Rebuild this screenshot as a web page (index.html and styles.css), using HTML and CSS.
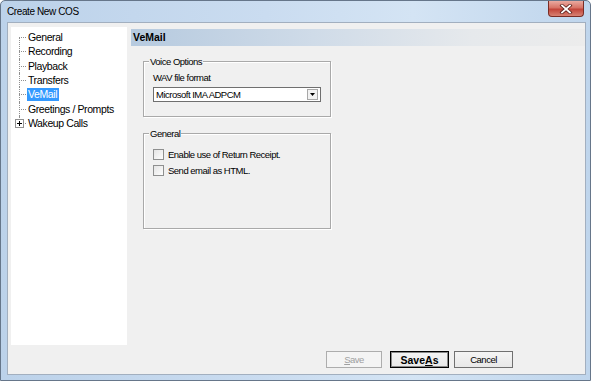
FILE: index.html
```html
<!DOCTYPE html>
<html lang="en">
<head>
    <meta charset="UTF-8">
    <title>Create New COS</title>
    <link rel="stylesheet" href="styles.css">
</head>
<body>

    <div class="window">
        <!-- Title bar -->
        <div class="titlebar">
            <span class="title">Create New COS</span>
            <div class="close">
                <svg width="14" height="10" viewBox="0 0 14 10">
                    <path d="M3 1.5 L11 8.5 M11 1.5 L3 8.5" stroke="#5a1f1a" stroke-width="3.4" stroke-linecap="square"/>
                    <path d="M3 1.5 L11 8.5 M11 1.5 L3 8.5" stroke="#fff" stroke-width="1.8" stroke-linecap="square"/>
                </svg>
            </div>
        </div>

        <div class="client">
            <div class="main">
                <!-- Navigation tree -->
                <ul class="tree">
                    <li class="first"><span class="label">General</span></li>
                    <li><span class="label">Recording</span></li>
                    <li><span class="label">Playback</span></li>
                    <li><span class="label">Transfers</span></li>
                    <li><span class="label selected">VeMail</span></li>
                    <li><span class="label">Greetings / Prompts</span></li>
                    <li class="last">
                        <span class="expander">
                            <svg width="7" height="7" viewBox="0 0 7 7"><path d="M1 3.5 H6 M3.5 1 V6" stroke="#000" stroke-width="1"/></svg>
                        </span>
                        <span class="label">Wakeup Calls</span>
                    </li>
                </ul>

                <!-- Page content -->
                <div class="page">
                    <div class="page-header">VeMail</div>

                    <div class="group voice">
                        <span class="legend">Voice Options</span>
                        <div class="field-label">WAV file format</div>
                        <div class="combo">
                            <span class="combo-text">Microsoft IMA ADPCM</span>
                            <span class="combo-btn">
                                <svg width="5" height="3" viewBox="0 0 5 3"><path d="M0 0 H5 L2.5 3 Z" fill="#000"/></svg>
                            </span>
                        </div>
                    </div>

                    <div class="group general">
                        <span class="legend">General</span>
                        <label class="check"><span class="box"></span>Enable use of Return Receipt.</label>
                        <label class="check"><span class="box"></span>Send email as HTML.</label>
                    </div>
                </div>
            </div>

            <!-- Dialog buttons -->
            <div class="footer">
                <button class="btn save" disabled><u>S</u>ave</button>
                <button class="btn saveas">Save<u>A</u>s</button>
                <button class="btn cancel">Cancel</button>
            </div>
        </div>
    </div>

</body>
</html>
```

FILE: styles.css
```css
/* General page styling */
* {
    box-sizing: border-box;
}

body {
    margin: 0;
    font-family: "Liberation Sans", Arial, sans-serif;
    background-color: #fff;
    color: #000;
}

/* Window frame */
.window {
    width: 591px;
    height: 381px;
    display: flex;
    flex-direction: column;
    background: linear-gradient(to right, #bcd2ea, #cadcf0 45%, #d4e4f4 70%, #bfd5ec);
    border: 1px solid #66768a;
    border-radius: 5px 5px 0 0;
}

.titlebar {
    height: 21px;
    display: flex;
    align-items: flex-start;
    padding-left: 6px;
}

.title {
    font-size: 10px;
    letter-spacing: -0.4px;
    line-height: 21px;
}

.close {
    margin-left: auto;
    margin-right: 6px;
    width: 36px;
    height: 16px;
    border: 1px solid #7a2c24;
    border-top: none;
    border-radius: 0 0 4px 4px;
    background: linear-gradient(#eaaaa0, #d77366 45%, #c2453a 55%, #d88273);
    display: flex;
    align-items: center;
    justify-content: center;
}

/* Client area */
.client {
    flex: 1;
    margin: 0 4px 5px 6px;
    background-color: #f0f0f0;
    border: 1px solid #a2afbf;
    display: flex;
    flex-direction: column;
}

.main {
    flex: 1;
    display: flex;
    padding: 4px 0 0 3px;
}

/* Tree view */
.tree {
    width: 116px;
    height: 318px;
    margin: 0;
    padding: 3px 0 0 0;
    list-style: none;
    background-color: #fff;
    font-size: 10.5px;
    letter-spacing: -0.4px;
}

.tree li {
    position: relative;
    height: 14.33px;
    padding-left: 16px;
    line-height: 14px;
}

.tree li::before {
    content: "";
    position: absolute;
    left: 8px;
    top: 7px;
    width: 7px;
    border-top: 1px dotted #8f8f8f;
}

.tree li::after {
    content: "";
    position: absolute;
    left: 8px;
    top: 0;
    height: 100%;
    border-left: 1px dotted #8f8f8f;
}

.tree li.first::after {
    top: 7px;
    height: 8px;
}

.tree li.last::after {
    height: 4px;
}

.tree .label {
    display: inline-block;
    padding: 0 2px 0 1px;
    line-height: 13px;
}

.tree .label.selected {
    background-color: #3399ff;
    color: #fff;
}

.expander {
    position: absolute;
    left: 4px;
    top: 3px;
    width: 9px;
    height: 9px;
    border: 1px solid #919191;
    background-color: #fff;
    z-index: 1;
    display: flex;
    align-items: center;
    justify-content: center;
}

.expander svg {
    display: block;
}

/* Page content */
.page {
    flex: 1;
    display: flex;
    flex-direction: column;
    margin-left: 4px;
    padding-top: 2px;
    font-size: 9.5px;
    letter-spacing: -0.5px;
}

.page-header {
    height: 17px;
    padding-left: 2px;
    line-height: 17px;
    font-size: 10.5px;
    font-weight: bold;
    letter-spacing: 0;
    background: linear-gradient(to right, #b6cadf, #cfdbe8 40%, #e6e9ec 75%, #ececec);
}

/* Group boxes */
.group {
    position: relative;
    width: 188px;
    margin-left: 12px;
    border: 1px solid #a9a9a9;
    box-shadow: inset 1px 1px 0 #fff, 1px 1px 0 #fff;
}

.legend {
    position: absolute;
    top: -7px;
    left: 5px;
    padding: 0 1px;
    line-height: 13px;
    background-color: #f0f0f0;
}

.voice {
    margin-top: 15px;
    height: 56px;
    padding: 9px 0 0 9px;
}

.field-label {
    line-height: 13px;
}

.combo {
    width: 168px;
    height: 15px;
    margin-top: 3px;
    display: flex;
    align-items: center;
    background-color: #fff;
    border: 1px solid #6f6f6f;
}

.combo-text {
    padding-left: 2px;
}

.combo-btn {
    margin-left: auto;
    margin-right: 2px;
    width: 11px;
    height: 11px;
    border: 1px solid #a8a8a8;
    background-color: #f2f2f2;
    display: flex;
    align-items: center;
    justify-content: center;
}

.combo-btn svg {
    display: block;
}

.general {
    margin-top: 16px;
    height: 96px;
    padding: 12px 0 0 9px;
}

.check {
    display: flex;
    align-items: center;
    gap: 4px;
    height: 16px;
}

.check .box {
    width: 11px;
    height: 11px;
    border: 1px solid #8e8f8f;
    background: linear-gradient(135deg, #e4e4e4, #fdfdfd);
}

/* Dialog buttons */
.footer {
    display: flex;
    justify-content: flex-end;
    padding: 0 72px 6px 0;
}

.btn {
    height: 17px;
    padding: 0;
    font-family: "Liberation Sans", Arial, sans-serif;
    font-size: 9.5px;
    letter-spacing: -0.5px;
    color: #000;
    background: linear-gradient(#f4f4f4, #e8e8e8);
    border: 1px solid #707070;
    border-radius: 0;
}

.btn.save {
    width: 56px;
    margin-right: 8px;
    color: #a0a0a0;
    border-color: #adadad;
    background: #f4f4f4;
}

.btn.saveas {
    width: 59px;
    margin-right: 5px;
    font-size: 10.5px;
    font-weight: bold;
    letter-spacing: 0;
    border-color: #000;
    box-shadow: inset 0 0 0 1px #8a8a8a;
}

.btn.cancel {
    width: 59px;
}
```
